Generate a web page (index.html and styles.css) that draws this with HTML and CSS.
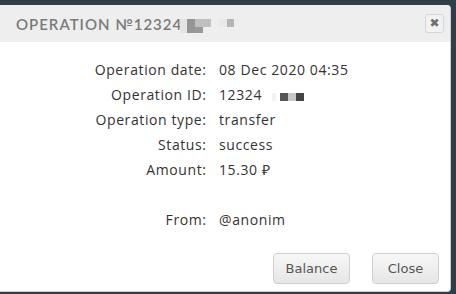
FILE: index.html
```html
<!DOCTYPE html>
<html lang="en">
<head>
  <meta charset="UTF-8" />
  <title>Operation</title>
  <link rel="stylesheet" href="styles.css">
</head>
<body>
  <div class="dialog">
    <div class="dialog-head">
      <span class="dialog-title">Operation №12324</span>
      <span class="blur blur-title">
        <i class="px" style="background:#e4e4e4;width:7px;height:14px"></i>
        <i class="px-col">
          <i class="px" style="background:#959595;width:8px;height:14px"></i>
        </i>
        <i class="px-col">
          <i class="px" style="background:#c0c0c0;width:16px;height:8px"></i>
          <i class="px" style="background:#999;width:8px;height:6px"></i>
        </i>
        <i class="px" style="background:#e8e8e8;width:8px;height:8px;margin-left:8px"></i>
        <i class="px" style="background:#b5b5b5;width:7px;height:8px"></i>
      </span>
      <button class="close-x">&#10006;</button>
    </div>
    <div class="dialog-body">
      <div class="info">
        <div class="label">Operation date:</div>
        <div class="value">08 Dec 2020 04:35</div>
        <div class="label">Operation ID:</div>
        <div class="value">12324
          <span class="blur blur-id">
            <i class="px" style="background:#f3f3f3;width:4px;height:8px"></i>
            <i class="px" style="background:#555;width:8px;height:8px;margin-left:4px"></i>
            <i class="px" style="background:#c8c8c8;width:8px;height:8px"></i>
            <i class="px" style="background:#444;width:8px;height:8px"></i>
          </span>
        </div>
        <div class="label">Operation type:</div>
        <div class="value">transfer</div>
        <div class="label">Status:</div>
        <div class="value">success</div>
        <div class="label">Amount:</div>
        <div class="value">15.30 ₽</div>
        <div class="label"></div>
        <div class="value"></div>
        <div class="label">From:</div>
        <div class="value">@anonim</div>
      </div>
    </div>
    <div class="dialog-foot">
      <button class="btn btn-balance">Balance</button>
      <button class="btn btn-close">Close</button>
    </div>
  </div>
</body>
</html>
```

FILE: styles.css
```css
body {
  margin: 0;
  padding-top: 5px;
  background: #2f3f47;
  height: 294px;
  box-sizing: border-box;
  overflow: hidden;
  font-family: "Open Sans", Arial, sans-serif;
}
.dialog {
  width: 450px;
  height: 286px;
  background: #fff;
  border-radius: 0 4px 4px 0;
  border-right: 1px solid #ccc;
  border-bottom: 1px solid #ccc;
  display: flex;
  flex-direction: column;
  overflow: hidden;
}
.dialog-head {
  height: 37px;
  background: #eeeeee;
  display: flex;
  align-items: center;
  padding-left: 16px;
  padding-right: 6px;
}
.dialog-title {
  font-family: Lato, sans-serif;
  font-size: 15px;
  font-weight: 600;
  letter-spacing: 1px;
  text-transform: uppercase;
  color: #7a7a7a;
}
.blur {
  display: inline-flex;
  align-items: flex-start;
}
.blur-title {
  margin-left: -2px;
  margin-top: 5px;
}
.px-col {
  display: inline-flex;
  flex-direction: column;
}
.px {
  display: block;
}
.close-x {
  margin-left: auto;
  width: 19px;
  height: 19px;
  padding: 0;
  border: 1px solid #d6d6d6;
  border-radius: 3px;
  background: #f2f2f2;
  color: #6f6f6f;
  font-size: 12px;
  font-weight: bold;
  line-height: 17px;
  font-family: "DejaVu Sans", sans-serif;
}
.dialog-body {
  flex: 1;
  padding-top: 18px;
}
.info {
  display: grid;
  grid-template-columns: 206px 1fr;
  column-gap: 13px;
  grid-auto-rows: 25px;
  font-size: 14px;
  letter-spacing: 0.6px;
  color: #333;
}
.label {
  text-align: right;
  margin-right: -0.6px;
}
.blur-id {
  margin-left: 6px;
  vertical-align: -1px;
}
.dialog-foot {
  display: flex;
  justify-content: flex-end;
  gap: 22px;
  padding: 0 11px 7px 0;
}
.btn {
  height: 31px;
  padding: 0;
  border: 1px solid #cfcfcf;
  border-radius: 4px;
  background: linear-gradient(#f7f7f7, #e6e6e6);
  color: #555;
  font-family: "DejaVu Sans", sans-serif;
  font-size: 13px;
}
.btn-balance {
  width: 77px;
}
.btn-close {
  width: 67px;
}
```
